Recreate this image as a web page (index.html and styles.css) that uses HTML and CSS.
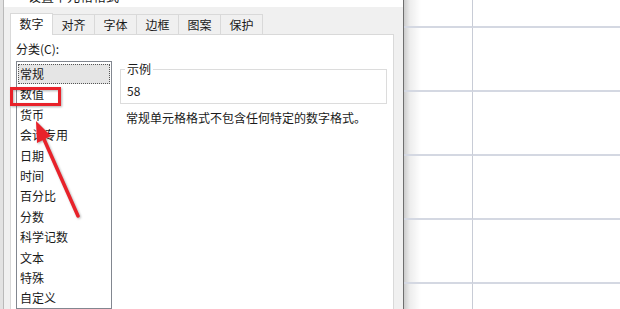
FILE: index.html
```html
<!DOCTYPE html>
<html lang="zh-CN">
<head>
  <meta charset="UTF-8" />
  <title>设置单元格格式</title>
  <link rel="stylesheet" href="styles.css">
</head>
<body>

<div class="window">
  <section class="dialog">
    <div class="titlebar"><span class="title">设置单元格格式</span></div>

    <nav class="tabs">
      <span class="tab active">数字</span>
      <span class="tab">对齐</span>
      <span class="tab">字体</span>
      <span class="tab">边框</span>
      <span class="tab">图案</span>
      <span class="tab">保护</span>
    </nav>

    <div class="panel">
      <div class="cat-label">分类(C):</div>
      <div class="panel-body">
        <ul class="category-list">
          <li class="selected">常规</li>
          <li>数值</li>
          <li>货币</li>
          <li>会计专用</li>
          <li>日期</li>
          <li>时间</li>
          <li>百分比</li>
          <li>分数</li>
          <li>科学记数</li>
          <li>文本</li>
          <li>特殊</li>
          <li>自定义</li>
        </ul>

        <div class="detail">
          <fieldset class="sample">
            <legend>示例</legend>
            <div class="sample-value">58</div>
          </fieldset>
          <p class="desc">常规单元格格式不包含任何特定的数字格式。</p>
        </div>
      </div>
    </div>
  </section>

  <div class="sheet">
    <div class="cell first"></div><div class="cell"></div>
    <div class="cell first"></div><div class="cell"></div>
    <div class="cell first"></div><div class="cell"></div>
    <div class="cell first"></div><div class="cell"></div>
    <div class="cell first"></div><div class="cell"></div>
    <div class="cell first"></div><div class="cell"></div>
  </div>
</div>

<!-- 标注：红框 + 箭头 -->
<svg class="annotation" width="620" height="309" viewBox="0 0 620 309">
  <g class="mark">
    <rect x="11.5" y="88.5" width="48" height="16" fill="none" stroke="#e8222a" stroke-width="3" />
    <line x1="78" y1="216" x2="43" y2="137" stroke="#e8222a" stroke-width="3.5" stroke-linecap="round" />
    <polygon points="36,121 51,136 37,143" fill="#e8222a" />
  </g>
</svg>

</body>
</html>
```

FILE: styles.css
```css
body {
  margin: 0;
  width: 620px;
  height: 309px;
  overflow: hidden;
  position: relative;
  background-color: #e2e2e2;
  font-family: "Noto Sans CJK SC", "Noto Sans", sans-serif;
  font-size: 12px;
  color: #1a1a1a;
}

.window {
  display: flex;
  height: 309px;
  overflow: hidden;
}

.dialog {
  margin-left: 3px;
  width: 399px;
  flex-shrink: 0;
  background-color: #f0f0f0;
  border-left: 1px solid #b9b9b9;
  border-right: 1px solid #6e6e6e;
}

.titlebar {
  height: 7px;
  background-color: white;
  overflow: hidden;
}

.title {
  display: block;
  margin-top: -11px;
  padding-left: 24px;
  font-size: 13px;
  line-height: 14px;
}

.tabs {
  display: flex;
  align-items: flex-end;
  height: 21px;
  margin-top: 6px;
  padding-left: 6px;
}

.tab {
  box-sizing: border-box;
  width: 43px;
  height: 20px;
  margin-left: -1px;
  border: 1px solid #d9d9d9;
  border-bottom: none;
  background-color: #f0f0f0;
  text-align: center;
  line-height: 19px;
}

.tab:first-child {
  margin-left: 0;
}

.tab.active {
  height: 22px;
  margin-bottom: -1px;
  background-color: white;
  position: relative;
  z-index: 1;
}

.panel {
  box-sizing: border-box;
  width: 384px;
  height: 275px;
  margin-left: 6px;
  padding: 6px 0 0 5px;
  background-color: white;
  border: 1px solid #d9d9d9;
  border-bottom: none;
}

.cat-label {
  line-height: 16px;
}

.panel-body {
  display: flex;
  gap: 8px;
  margin-top: 4px;
}

.category-list {
  box-sizing: border-box;
  width: 96px;
  height: 248px;
  margin: 0;
  padding: 2px 1px 0;
  list-style: none;
  border: 1px solid #828790;
  overflow: hidden;
}

.category-list li {
  height: 20.4px;
  line-height: 20.4px;
  padding-left: 2px;
}

.category-list li.selected {
  background-color: #e5e5e5;
  outline: 1px dotted #555;
  outline-offset: -1px;
}

.detail {
  display: flex;
  flex-direction: column;
  margin-top: 1px;
}

.sample {
  box-sizing: border-box;
  width: 267px;
  min-width: 0;
  margin: 0;
  padding: 0 4px 4px;
  border: 1px solid #dcdcdc;
}

.sample legend {
  padding: 0 2px;
  line-height: 14px;
}

.sample-value {
  padding: 7px 0 0 2px;
  line-height: 16px;
}

.desc {
  margin: 6px 0 0 6px;
  line-height: 16px;
}

.sheet {
  flex: 1;
  display: grid;
  grid-template-columns: 69px 1fr;
  grid-template-rows: 28px repeat(4, 64px) 25px;
  background: linear-gradient(to right, rgba(0, 0, 0, 0.2), rgba(0, 0, 0, 0.07) 6px, rgba(0, 0, 0, 0) 17px), white;
}

.cell {
  box-sizing: border-box;
  border-bottom: 2px solid #d4d8e2;
}

.cell.first {
  border-right: 1px solid #c8ccd6;
}

.sheet .cell:nth-last-child(-n+2) {
  border-bottom: none;
}

.annotation {
  position: absolute;
  top: 0;
  left: 0;
  pointer-events: none;
}

.mark {
  filter: drop-shadow(1px 1px 1px rgba(0, 0, 0, 0.3));
}
```
